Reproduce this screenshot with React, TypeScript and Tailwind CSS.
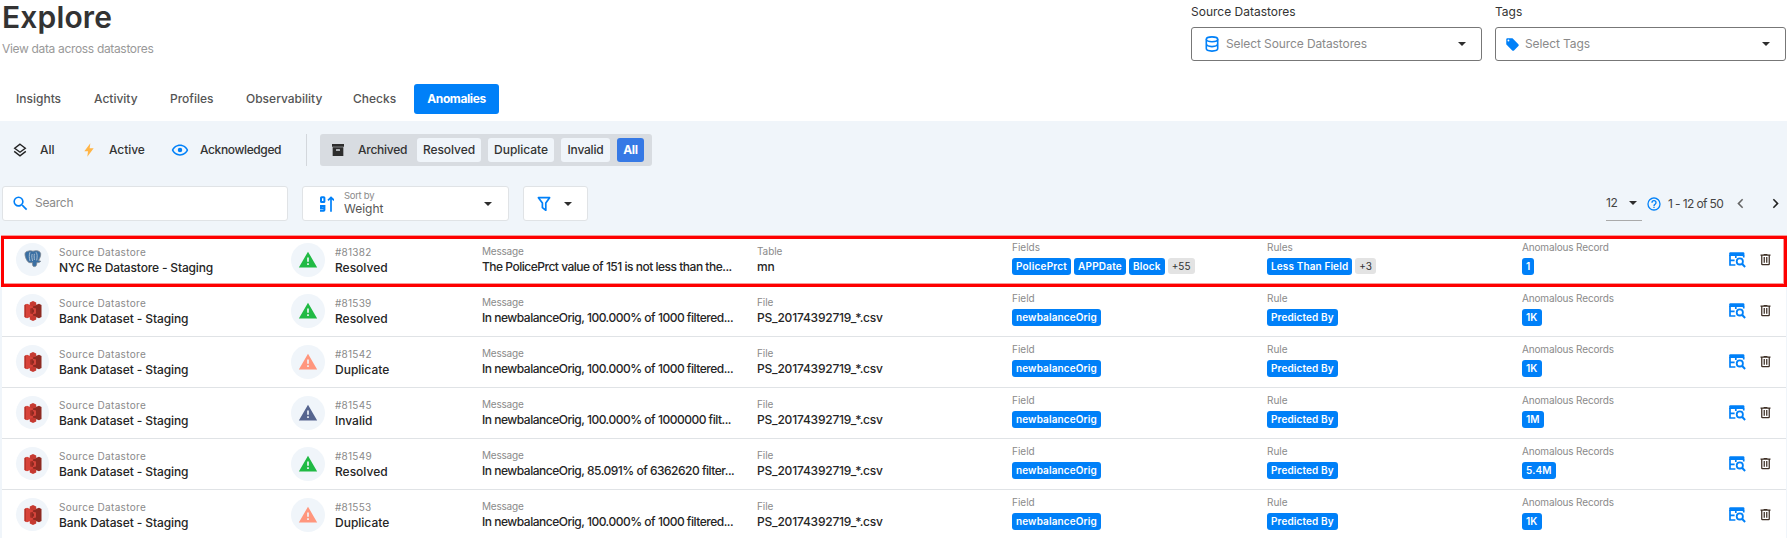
import React from "react";

const P = {
  tag: "M5.5,7A1.5,1.5 0 0,1 4,5.5A1.5,1.5 0 0,1 5.5,4A1.5,1.5 0 0,1 7,5.5A1.5,1.5 0 0,1 5.5,7M21.41,11.58L12.41,2.58C12.05,2.22 11.55,2 11,2H4C2.89,2 2,2.89 2,4V11C2,11.55 2.22,12.05 2.59,12.41L11.58,21.41C11.95,21.77 12.45,22 13,22C13.55,22 14.05,21.77 14.41,21.41L21.41,14.41C21.78,14.05 22,13.55 22,13C22,12.44 21.77,11.94 21.41,11.58Z",
  archive: "M3,3H21V7H3V3M4,8H20V21H4V8M9.5,11A0.5,0.5 0 0,0 9,11.5V13H15V11.5A0.5,0.5 0 0,0 14.5,11H9.5Z",
  alert: "M13 14H11V9H13M13 18H11V16H13M1 21H23L12 2L1 21Z",
  magnify: "M9.5,3A6.5,6.5 0 0,1 16,9.5C16,11.11 15.41,12.59 14.44,13.73L14.71,14H15.5L20.5,19L19,20.5L14,15.5V14.71L13.73,14.44C12.59,15.41 11.11,16 9.5,16A6.5,6.5 0 0,1 3,9.5A6.5,6.5 0 0,1 9.5,3M9.5,5C7,5 5,7 5,9.5C5,12 7,14 9.5,14C12,14 14,12 14,9.5C14,7 12,5 9.5,5Z",
  trash: "M9,3V4H4V6H5V19A2,2 0 0,0 7,21H17A2,2 0 0,0 19,19V6H20V4H15V3H9M7,6H17V19H7V6M9,8V17H11V8H9M13,8V17H15V8H13Z",
  eye: "M12,9A3,3 0 0,1 15,12A3,3 0 0,1 12,15A3,3 0 0,1 9,12A3,3 0 0,1 12,9M12,4.5C17,4.5 21.27,7.61 23,12C21.27,16.39 17,19.5 12,19.5C7,19.5 2.73,16.39 1,12C2.73,7.61 7,4.5 12,4.5M3.18,12C4.83,15.36 8.24,17.5 12,17.5C15.76,17.5 19.17,15.36 20.82,12C19.17,8.64 15.76,6.5 12,6.5C8.24,6.5 4.83,8.64 3.18,12Z",
  help: "M11,18H13V16H11V18M12,2A10,10 0 0,0 2,12A10,10 0 0,0 12,22A10,10 0 0,0 22,12A10,10 0 0,0 12,2M12,20C7.59,20 4,16.41 4,12C4,7.59 7.59,4 12,4C16.41,4 20,7.59 20,12C20,16.41 16.41,20 12,20M12,6A4,4 0 0,0 8,10H10A2,2 0 0,1 12,8A2,2 0 0,1 14,10C14,12 11,11.75 11,15H13C13,12.75 16,12.5 16,10A4,4 0 0,0 12,6Z",
  left: "M15.41,16.58L10.83,12L15.41,7.41L14,6L8,12L14,18L15.41,16.58Z",
  right: "M8.59,16.58L13.17,12L8.59,7.41L10,6L16,12L10,18L8.59,16.58Z",
  bolt: "M14,2L5,14H10.5L9.5,22L19,9.5H13Z",
};

function Icon({ d, className = "" }: { d: string; className?: string }) {
  return (
    <svg viewBox="0 0 24 24" fill="currentColor" className={`block shrink-0 ${className}`}>
      <path d={d} />
    </svg>
  );
}

function Caret({ className = "" }: { className?: string }) {
  return (
    <svg viewBox="0 0 8 4" className={`block h-1 w-2 shrink-0 text-[#2d2d2d] ${className}`} fill="currentColor">
      <path d="M0 0H8L4 4Z" />
    </svg>
  );
}

function Database() {
  return (
    <svg viewBox="0 0 14 16" className="block h-4 w-3.5 shrink-0 text-[#0080f8]" fill="none" stroke="currentColor" strokeWidth="1.6">
      <ellipse cx="7" cy="3.3" rx="5.7" ry="2.4" />
      <path d="M1.3 3.3V12.6C1.3 14 3.8 15.1 7 15.1S12.7 14 12.7 12.6V3.3M1.3 7.6C1.3 9.6 3.8 10.6 7 10.6S12.7 9.6 12.7 7.6" />
    </svg>
  );
}

function Layers() {
  return (
    <svg viewBox="0 0 14 14" className="block size-3.5 shrink-0 text-[#222]" fill="none" stroke="currentColor" strokeWidth="1.4">
      <path d="M7 1.2L12.3 5.2L7 9.2L1.7 5.2Z" />
      <path d="M1.2 8.4L7 12.9L12.8 8.4" />
    </svg>
  );
}

function SortNumeric() {
  return (
    <svg viewBox="0 0 14 16" className="block h-4 w-3.5 shrink-0 text-[#0080f8]" fill="none" stroke="currentColor" strokeWidth="2">
      <rect x="1" y="1.2" width="3.4" height="4.8" rx="0.6" />
      <path d="M0 14.8H3.6Q4.4 14.8 4.4 14V10H1V12.2H4.4" />
      <path d="M11 15.8V1.5M8 4.3L11 1.4L14 4.3" strokeWidth="1.7" />
    </svg>
  );
}

function Funnel() {
  return (
    <svg viewBox="0 0 14 16" className="block h-4 w-3.5 shrink-0 text-[#0080f8]" fill="none" stroke="currentColor" strokeWidth="1.7">
      <path d="M1.4 1.7H12.6L8.8 7V14.2L5.4 11.6V7Z" strokeLinejoin="round" />
    </svg>
  );
}

function TableSearch() {
  return (
    <svg viewBox="0 0 17 16" className="block h-4 w-[17px] shrink-0 text-[#0080f8]" fill="none" stroke="currentColor">
      <path d="M0.2 1.6Q0.2 0.3 1.4 0.3H14.2Q15.4 0.3 15.4 1.6V4H0.2Z" fill="currentColor" stroke="none" />
      <path d="M1 3V13H6.4M1 8.4H5.6M6.8 4V6M14.7 3.6V5.6" strokeWidth="1.7" />
      <circle cx="10.8" cy="9.4" r="3.1" strokeWidth="1.8" />
      <path d="M13 11.8L16.1 15" strokeWidth="2" />
    </svg>
  );
}

function S3Logo() {
  return (
    <svg viewBox="0 0 18 20" className="block h-5 w-[18px]">
      <path d="M0.5 4L3 2.8L9 5V15L3 17.2L0.5 16Z" fill="#d8433a" />
      <path d="M0.5 4L2 3.3V16.7L0.5 16Z" fill="#b5342b" />
      <path d="M17.5 4L15 2.8L9 5V15L15 17.2L17.5 16Z" fill="#8e2a21" />
      <path d="M5.8 1.6L9 0L12.2 1.6V4.4L9 5.4L5.8 4.4Z" fill="#c63a31" />
      <path d="M5.8 18.4L9 20L12.2 18.4V15.6L9 14.6L5.8 15.6Z" fill="#c63a31" />
      <path d="M6.2 7.4L9 6.8V13.2L6.2 12.6Z" fill="#a12e25" />
      <path d="M9 6.8L12 7.4V12.6L9 13.2Z" fill="#d5443b" />
      <path d="M8 8.6H10V11.4H8Z" fill="#8e2a21" />
    </svg>
  );
}

function PostgresLogo() {
  return (
    <svg viewBox="0 0 18 19" className="block h-[19px] w-[18px]">
      <path
        d="M4 1.2C7 .4 8 1 9 1.2C11 .5 15.5.2 16.6 3.2C17.2 5.5 15.6 8.6 14.5 10.6L16.7 11.2C15.8 12.6 14 12.8 12.9 12.5C12.6 15 12.4 16.4 10.7 16.6C8.5 16.8 8.5 15 8.3 12.4C6.6 12.8 5.3 13.1 4 11.8C2.1 9.7.8 6 1 3.7C1.2 2 2.6 1.4 4 1.2Z"
        fill="#3a6fa3"
        stroke="#7d8790"
        strokeWidth=".8"
      />
      <path d="M6 2.2C5 4.6 5.1 8 6 11M12 2.2C13.6 4.2 13.2 6.8 12.7 10.4M8.2 4C7.4 6.4 8 8.4 8.6 11M10.4 3.8C9.9 6 10.3 8 10.4 10" stroke="#c3d0dc" strokeWidth=".8" fill="none" />
    </svg>
  );
}

type Row = {
  pg?: boolean;
  name: string;
  id: string;
  status: "Resolved" | "Duplicate" | "Invalid";
  message: string;
  kind: string;
  file: string;
  fields: string[];
  moreFields?: string;
  rules: string[];
  moreRules?: string;
  count: string;
};

const bank = {
  name: "Bank Dataset - Staging",
  kind: "File",
  file: "PS_20174392719_*.csv",
  fields: ["newbalanceOrig"],
  rules: ["Predicted By"],
};

const rows: Row[] = [
  {
    pg: true,
    name: "NYC Re Datastore - Staging",
    id: "#81382",
    status: "Resolved",
    message: "The PolicePrct value of 151 is not less than the...",
    kind: "Table",
    file: "mn",
    fields: ["PolicePrct", "APPDate", "Block"],
    moreFields: "+55",
    rules: ["Less Than Field"],
    moreRules: "+3",
    count: "1",
  },
  { ...bank, id: "#81539", status: "Resolved", message: "In newbalanceOrig, 100.000% of 1000 filtered...", count: "1K" },
  { ...bank, id: "#81542", status: "Duplicate", message: "In newbalanceOrig, 100.000% of 1000 filtered...", count: "1K" },
  { ...bank, id: "#81545", status: "Invalid", message: "In newbalanceOrig, 100.000% of 1000000 filt...", count: "1M" },
  { ...bank, id: "#81549", status: "Resolved", message: "In newbalanceOrig, 85.091% of 6362620 filter...", count: "5.4M" },
  { ...bank, id: "#81553", status: "Duplicate", message: "In newbalanceOrig, 100.000% of 1000 filtered...", count: "1K" },
];

const statusColor = {
  Resolved: "text-[#20ba44]",
  Duplicate: "text-[#ff967d]",
  Invalid: "text-[#56658f]",
};

function Chips({ items, more }: { items: string[]; more?: string }) {
  const tracking = items.length > 1 ? "tracking-[0.2px]" : "tracking-[0.12px]";
  return (
    <div className="mt-1 flex gap-[3px]">
      {items.map((t) => (
        <span key={t} className={`flex h-[17px] items-center rounded-[3px] bg-[#0080f8] px-1 text-[10px] font-semibold text-white ${tracking}`}>
          {t}
        </span>
      ))}
      {more && (
        <span className="flex h-4 items-center rounded-[3px] bg-[#e3e3e3] px-1 text-[10px] text-[#333]">{more}</span>
      )}
    </div>
  );
}

function Pair({
  label,
  value,
  className,
  labelClass = "",
  valueClass = "",
}: {
  label: string;
  value: string;
  className: string;
  labelClass?: string;
  valueClass?: string;
}) {
  return (
    <div className={`shrink-0 pt-2.5 ${className}`}>
      <div className={`text-[10px] leading-[14px] text-[#8a8a8a] ${labelClass}`}>{label}</div>
      <div className={`mt-px text-[12px] leading-4 font-medium text-[#252525] ${valueClass}`}>{value}</div>
    </div>
  );
}

function AnomalyRow({ row, index }: { row: Row; index: number }) {
  const s = row.count === "1" ? "" : "s";
  const multi = row.fields.length > 1 ? "s" : "";
  return (
    <div className="relative flex h-[51px] shrink-0 border-b border-[#e0e3e6] bg-white whitespace-nowrap">
      <div className="flex w-[289px] shrink-0 pl-3.5">
        <span className="mt-2 flex size-[33px] shrink-0 items-center justify-center rounded-full bg-[#f0f5fa]">
          {row.pg ? <PostgresLogo /> : <S3Logo />}
        </span>
        <Pair
          label="Source Datastore"
          value={row.name}
          className="pl-2.5"
          labelClass="tracking-[0.32px]"
          valueClass={row.pg ? "tracking-[-0.16px]" : "tracking-[-0.1px]"}
        />
      </div>
      <div className="flex w-[190px] shrink-0">
        <span className="mt-2 flex size-[34px] shrink-0 items-center justify-center rounded-full bg-[#f0f5fa]">
          <Icon d={P.alert} className={`size-5 ${statusColor[row.status]}`} />
        </span>
        <Pair label={row.id} value={row.status} className="pl-2.5" labelClass="tracking-[0.25px]" />
      </div>
      <Pair label="Message" value={row.message} className="-mt-px w-[276px] pl-px" labelClass="tracking-[-0.2px]" valueClass="tracking-[-0.49px]" />
      <Pair label={row.kind} value={row.file} className="-mt-px w-[253px]" labelClass="tracking-[-0.1px]" valueClass="tracking-[-0.2px]" />
      <div className="w-[255px] shrink-0 pt-[5px] pl-0.5">
        <div className="text-[10px] leading-[14px] text-[#8a8a8a]">{`Field${multi}`}</div>
        <Chips items={row.fields} more={row.moreFields} />
      </div>
      <div className="w-[255px] shrink-0 pt-[5px] pl-0.5">
        <div className="text-[10px] leading-[14px] text-[#8a8a8a]">{`Rule${multi}`}</div>
        <Chips items={row.rules} more={row.moreRules} />
      </div>
      <div className="w-[208px] shrink-0 pt-[5px] pl-0.5">
        <div className="text-[10px] leading-[14px] tracking-[-0.15px] text-[#8a8a8a]">{`Anomalous Record${s}`}</div>
        <Chips items={[row.count]} />
      </div>
      <div className="flex gap-3 pt-[17px] pl-px">
        <TableSearch />
        <Icon d={P.trash} className="size-[15px] text-[#3d2f25]" />
      </div>
      {index === 0 && (
        <div className="absolute top-px -right-px -left-px z-10 h-[51px] border-[3px] border-[#fe0000] shadow-[0_-1px_0_#f79a9a,inset_-1px_-1px_0_#f79a9a]" />
      )}
    </div>
  );
}

function Select({ label, icon, text, pad }: { label: string; icon: React.ReactNode; text: string; pad: string }) {
  return (
    <div className="w-[291px]">
      <div className="pt-[3px] text-[12px] leading-[18px] text-[#333]">{label}</div>
      <div className={`mt-1.5 flex h-[34px] items-center rounded-[3px] border border-[#777] bg-white pr-[15px] ${pad}`}>
        {icon}
        <span className="flex-1 text-[12px] tracking-[-0.1px] text-[#8a8a8a]">{text}</span>
        <Caret />
      </div>
    </div>
  );
}

export default function App() {
  return (
    <div className="flex h-[538px] w-[1787px] flex-col overflow-hidden bg-white font-['Inter','Liberation_Sans',sans-serif] text-[#252525]">
      <header className="flex h-[121px] shrink-0 justify-between">
        <div>
          <h1 className="-mt-px pl-0.5 text-[30px] leading-[36px] font-semibold tracking-[0.15px] text-[#333]">Explore</h1>
          <p className="mt-1.5 pl-0.5 text-[12px] leading-4 tracking-[-0.33px] text-[#999]">View data across datastores</p>
          <nav className="mt-[27px] flex h-[30px] items-center text-[12px] font-medium text-[#555]">
            <span className="w-[78px] pl-4">Insights</span>
            <span className="w-[76px] pl-4">Activity</span>
            <span className="w-[76px] pl-4">Profiles</span>
            <span className="w-[107px] pl-4">Observability</span>
            <span className="w-[77px] pl-4">Checks</span>
            <span className="flex h-[30px] w-[85px] items-center justify-center rounded-[3px] bg-[#0080f8] font-bold tracking-[-0.4px] text-white">Anomalies</span>
          </nav>
        </div>
        <div className="flex gap-[13px] pr-px">
          <Select label="Source Datastores" text="Select Source Datastores" pad="pl-[13px] gap-[7px]" icon={<Database />} />
          <Select label="Tags" text="Select Tags" pad="pl-[9px] gap-[5px]" icon={<Icon d={P.tag} className="size-[15px] text-[#0080f8]" />} />
        </div>
      </header>

      <main className="flex flex-1 flex-col bg-[#f0f5fa]">
        <div className="mt-[13px] flex h-8 shrink-0 items-center pl-[13px] text-[12px] font-medium tracking-[-0.05px] text-[#333]">
          <Layers />
          <span className="w-[54px] pl-[13px]">All</span>
          <Icon d={P.bolt} className="size-4 text-[#ffb547]" />
          <span className="w-[74px] pl-3">Active</span>
          <Icon d={P.eye} className="size-[18px] text-[#0080f8]" />
          <span className="w-[117px] pl-[11px] tracking-[-0.38px]">Acknowledged</span>
          <div className="h-8 w-px bg-[#d3d7dc]" />
          <div className="ml-[13px] flex h-8 w-[332px] items-center rounded-[3px] bg-[#d8dce1] pl-2.5">
            <Icon d={P.archive} className="size-4 text-[#2d2d2d]" />
            <span className="w-[71px] pl-3 tracking-[-0.25px]">Archived</span>
            <span className="flex h-6 w-16 items-center justify-center rounded-[3px] bg-[#f0f5fa]">Resolved</span>
            <span className="ml-[7px] flex h-6 w-[66px] items-center justify-center rounded-[3px] bg-[#f0f5fa]">Duplicate</span>
            <span className="ml-[7px] flex h-6 w-[49px] items-center justify-center rounded-[3px] bg-[#f0f5fa] tracking-[-0.2px]">Invalid</span>
            <span className="ml-[7px] flex h-6 w-[27px] items-center justify-center rounded-[3px] bg-[#3679e5] font-bold tracking-[-0.3px] text-white">All</span>
          </div>
        </div>

        <div className="mt-5 flex h-[35px] shrink-0 items-center pl-0.5">
          <div className="flex h-[35px] w-[286px] items-center rounded-[3px] border border-[#e0e3e6] bg-white pl-2">
            <Icon d={P.magnify} className="size-[19px] text-[#0080f8]" />
            <span className="-mt-0.5 pl-[5px] text-[12px] tracking-[-0.25px] text-[#8a8a8a]">Search</span>
          </div>
          <div className="ml-3.5 flex h-[35px] w-[207px] items-center rounded-[3px] border border-[#e0e3e6] bg-white pr-4 pl-[17px]">
            <SortNumeric />
            <div className="-mt-0.5 flex-1 pl-2.5">
              <div className="text-[9.5px] leading-[12px] tracking-[-0.3px] text-[#8a8a8a]">Sort by</div>
              <div className="text-[12px] leading-[13px] text-[#555]">Weight</div>
            </div>
            <Caret />
          </div>
          <div className="ml-3.5 flex h-[35px] w-[65px] items-center rounded-[3px] border border-[#e0e3e6] bg-white pl-[13px]">
            <Funnel />
            <Caret className="ml-[13px]" />
          </div>
          <div className="ml-auto flex h-[35px] items-center pr-0.5 text-[12px] text-[#444]">
            <div className="flex h-[35px] w-9 items-center justify-between border-b border-[#aaa] pr-[5px]">
              <span className="tracking-[-0.5px]">12</span>
              <Caret />
            </div>
            <Icon d={P.help} className="ml-1 size-4 text-[#0080f8]" />
            <span className="w-[69px] pl-1.5 tracking-[-0.62px] whitespace-nowrap">1 - 12 of 50</span>
            <Icon d={P.left} className="size-[19px] text-[#666]" />
            <Icon d={P.right} className="ml-4 size-[19px] text-[#222]" />
          </div>
        </div>

        <section className="mt-3.5 mr-px ml-0.5 flex flex-col">
          {rows.map((row, i) => (
            <AnomalyRow key={row.id} row={row} index={i} />
          ))}
        </section>
      </main>
    </div>
  );
}
